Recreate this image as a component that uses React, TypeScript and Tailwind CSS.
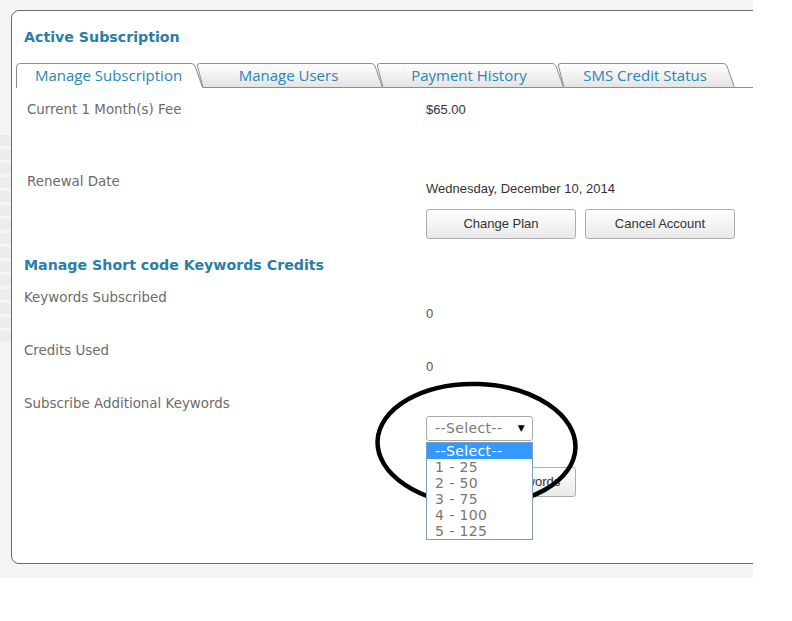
import React from 'react';

const label = "font-['DejaVu_Sans',Verdana,sans-serif] text-[13.4px] leading-[16px] text-[#6b6b6b]";
const value = "font-['Liberation_Sans',Arial,sans-serif] text-[13px] leading-[16px] text-[#333]";
const heading = "font-['DejaVu_Sans',Verdana,sans-serif] font-bold text-[14.2px] leading-[20px] text-[#2a7ea6]";
const button =
  "h-[30px] w-[150px] rounded-[3px] border border-[#adadad] bg-[linear-gradient(to_bottom,#ffffff,#e9e9e9)] font-['Liberation_Sans',Arial,sans-serif] text-[13px] text-[#333]";

const tabs = [
  { name: 'Manage Subscription', width: 187, active: true },
  { name: 'Manage Users', width: 187, active: false },
  { name: 'Payment History', width: 188, active: false },
  { name: 'SMS Credit Status', width: 178, active: false },
];

function Tab({ name, width, active, first }: { name: string; width: number; active: boolean; first: boolean }) {
  const w = width;
  const path = active
    ? `M0.5,25 L0.5,4 Q0.5,0.5 4,0.5 L${w - 12},0.5 Q${w - 9},0.5 ${w - 8},3 L${w - 0.5},24.5`
    : `M7,24.5 L1.5,3 Q1,0.5 3.5,0.5 L${w - 12},0.5 Q${w - 9},0.5 ${w - 8},3 L${w - 0.5},24.5 Z`;
  return (
    <div
      className={`relative h-[25px] shrink-0 ${first ? '' : '-ml-[7px]'} ${active ? 'z-10' : ''}`}
      style={{ width }}
    >
      <svg className="absolute inset-0" width={w} height={25} viewBox={`0 0 ${w} 25`}>
        <defs>
          <linearGradient id="tabgrad" x1="0" y1="0" x2="0" y2="1">
            <stop offset="0" stopColor="#ffffff" />
            <stop offset="1" stopColor="#e3e3e3" />
          </linearGradient>
        </defs>
        <path d={path} fill={active ? '#ffffff' : 'url(#tabgrad)'} stroke="#8c8c8c" strokeWidth="1" />
      </svg>
      <div className="relative flex h-full items-center justify-center pr-[2px] font-['Open_Sans',sans-serif] text-[15px] text-[#2a86b2]">
        {name}
      </div>
    </div>
  );
}

function Row({
  title,
  children,
  width,
  className = '',
}: {
  title: string;
  children: React.ReactNode;
  width: string;
  className?: string;
}) {
  return (
    <div className={`flex ${className}`}>
      <div className={`${label} ${width} shrink-0`}>{title}</div>
      <div>{children}</div>
    </div>
  );
}

export default function App() {
  const options = ['1 - 25', '2 - 50', '3 - 75', '4 - 100', '5 - 125'];
  return (
    <div className="relative h-[621px] w-[792px] bg-white">
      <div className="flex h-[578px] w-[753px] overflow-hidden bg-[#f4f4f4]">
        <div className="flex w-[11px] shrink-0 flex-col">
          <div className="h-[135px] bg-[#f4f4f4]" />
          <div className="h-[210px] bg-[repeating-linear-gradient(to_bottom,#ececec_0px,#ececec_11px,#f5f5f5_11px,#f5f5f5_14px)]" />
          <div className="flex-1 bg-[#f4f4f4]" />
        </div>
        <div className="pt-[10px]">
          <div className="h-[554px] w-[800px] rounded-l-[8px] border border-[#6a6a6a] bg-white">
            <div className={`${heading} ml-[12px] mt-[16px]`}>Active Subscription</div>

            <div className="ml-[4px] mt-[16px] flex">
              {tabs.map((t, i) => (
                <Tab key={t.name} name={t.name} width={t.width} active={t.active} first={i === 0} />
              ))}
              <div className="flex-1 border-b border-[#8c8c8c]" />
            </div>

            <div className="pl-[15px]">
              <Row title="Current 1 Month(s) Fee" width="w-[399px]" className="mt-[14px]">
                <div className={value}>$65.00</div>
              </Row>
              <Row title="Renewal Date" width="w-[399px]" className="mt-[56px]">
                <div className={`${value} pt-[7px]`}>Wednesday, December 10, 2014</div>
                <div className="mt-[12px] flex gap-[9px]">
                  <button className={button}>Change Plan</button>
                  <button className={button}>Cancel Account</button>
                </div>
              </Row>
            </div>

            <div className="pl-[12px]">
              <div className={`${heading} mt-[16px]`}>Manage Short code Keywords Credits</div>
              <Row title="Keywords Subscribed" width="w-[402px]" className="mt-[15px]">
                <div className={`${value} pt-[16px] text-[#555]`}>0</div>
              </Row>
              <Row title="Credits Used" width="w-[402px]" className="mt-[21px]">
                <div className={`${value} pt-[16px] text-[#555]`}>0</div>
              </Row>
              <div className="mt-[21px] flex">
                <div className={`${label} w-[402px] shrink-0`}>Subscribe Additional Keywords</div>
                <div className="pt-[20px]">
                  <div className="relative w-[107px]">
                    <div className="flex h-[25px] items-center justify-between rounded-[3px] border border-[#a9a9a9] bg-white pl-[8px] pr-[7px] font-['DejaVu_Sans',Verdana,sans-serif] text-[14px] tracking-[0.4px] text-[#7a7a7a]">
                      <span>--Select--</span>
                      <span className="text-[9px] text-black">▼</span>
                    </div>
                    <div className="absolute left-0 top-[26px] z-20 w-[107px] border border-[#7f9db9] bg-white font-['DejaVu_Sans',Verdana,sans-serif] text-[14px] leading-[16px] tracking-[0.4px] text-[#7b7670]">
                      <div className="h-[16px] bg-[#3399ff] pl-[8px] text-white">--Select--</div>
                      {options.map((o) => (
                        <div key={o} className="h-[16px] pl-[8px]">
                          {o}
                        </div>
                      ))}
                    </div>
                  </div>
                  <button className={`${button} mt-[26px] h-[29px]`}>Subscribe Keywords</button>
                </div>
              </div>
            </div>
          </div>
        </div>
      </div>

      <svg className="pointer-events-none absolute left-0 top-0" width="792" height="621">
        <ellipse
          cx="476.5"
          cy="444.5"
          rx="99"
          ry="60.5"
          fill="none"
          stroke="#000"
          strokeWidth="4.5"
          transform="rotate(2 476.5 444.5)"
        />
      </svg>
    </div>
  );
}
